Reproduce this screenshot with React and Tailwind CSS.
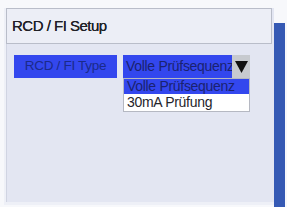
export default function App() {
  return (
    <div
      className="w-[287px] h-[207px] bg-[#f7f8fb] flex pl-[4px] pt-[8px] overflow-hidden"
      style={{ fontFamily: '"Liberation Sans", Arial, sans-serif' }}
    >
      {/* panel */}
      <div className="w-[270px] flex flex-col bg-[#e3e6f2] border-l-[2px] border-[#eef0f7] border-b-[3px] border-b-[#eef0f7] mb-[2px]">
        <div className="h-[36px] bg-[#eceef6] border border-[#b9bdc9] flex items-center pl-[5px] mr-[2px]">
          <span className="text-[15px] text-[#202026] tracking-[-0.5px] [text-shadow:0_0_0.6px_#202026]">RCD / FI Setup</span>
        </div>
        <div className="flex-1 flex items-start gap-[6px] pt-[11px] pl-[7px] border-l border-[#d0d4e2]">
          <div className="w-[103px] h-[23px] bg-[#3347ee] flex items-center justify-center">
            <span className="text-[13.5px] text-[#1a2a8a] tracking-[-0.3px]">RCD / FI Type</span>
          </div>
          <div className="flex flex-col w-[127px]">
            <div className="flex h-[23px]">
              <div className="flex-1 bg-[#3347ee] flex items-center pl-[3px] overflow-hidden whitespace-nowrap">
                <span className="text-[14px] text-[#1a2270] tracking-[-0.3px]">Volle Prüfsequenz</span>
              </div>
              <div className="w-[18px] bg-[#c7cacf] flex items-center justify-center">
                <svg width="13" height="15" viewBox="0 0 13 15">
                  <path d="M0 2 L13 2 L6.5 14 Z" fill="#111" />
                </svg>
              </div>
            </div>
            <div className="border border-[#b5b8c2] bg-white">
              <div className="h-[15px] bg-[#3347ee] flex items-center pl-[3px] whitespace-nowrap overflow-hidden">
                <span className="text-[14px] text-[#1a2270] tracking-[-0.3px]">Volle Prüfsequenz</span>
              </div>
              <div className="h-[17px] flex items-center pl-[3px]">
                <span className="text-[14px] text-[#25252b] tracking-[-0.3px]">30mA Prüfung</span>
              </div>
            </div>
          </div>
        </div>
      </div>
      {/* right bar */}
      <div className="w-[11px] mt-[15px] bg-[#3559b4]" />
    </div>
  );
}
